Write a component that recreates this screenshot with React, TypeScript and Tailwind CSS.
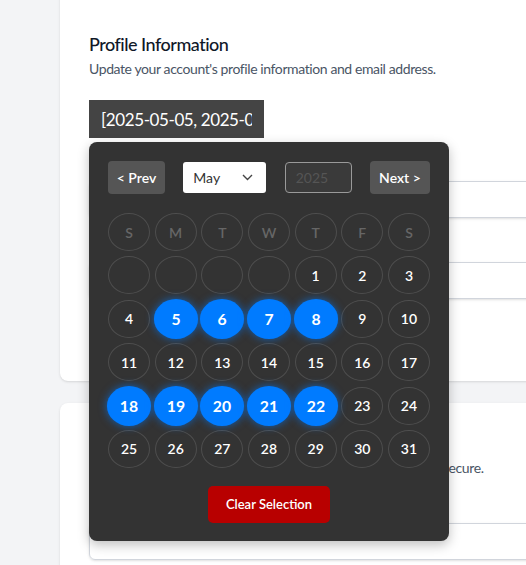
import { useState } from 'react';

const WEEKDAYS = ['S', 'M', 'T', 'W', 'T', 'F', 'S'];
const MONTHS = [
  'January', 'February', 'March', 'April', 'May', 'June',
  'July', 'August', 'September', 'October', 'November', 'December',
];

function pad(n: number) {
  return n < 10 ? `0${n}` : `${n}`;
}

function DatePopup({ selected, onClear }: { selected: number[]; onClear: () => void }) {
  // mayo 2025 empieza en jueves
  const cells: (number | null)[] = [null, null, null, null];
  for (let d = 1; d <= 31; d++) cells.push(d);

  return (
    <div className="absolute left-0 top-[calc(100%+4px)] z-10 w-[360px] rounded-lg bg-[#333333] px-[19px] pt-[19px] pb-[18px] shadow-[0_4px_12px_rgba(0,0,0,0.25)]">
      <div className="flex h-[33px] items-center justify-between">
        <button className="h-[33px] w-[57px] rounded-[4px] bg-[#555555] text-[14px] font-semibold text-white">
          &lt; Prev
        </button>
        <div className="relative h-[31px] w-[83px]">
          <select
            defaultValue="May"
            className="h-full w-full appearance-none rounded-[3px] bg-white pl-[10px] text-[14px] text-[#333333] outline-none"
          >
            {MONTHS.map((m) => (
              <option key={m} value={m.slice(0, 3) === 'May' ? 'May' : m}>
                {m}
              </option>
            ))}
          </select>
          <svg
            className="pointer-events-none absolute right-[13px] top-[12px]"
            width="11"
            height="7"
            viewBox="0 0 11 7"
            fill="none"
            stroke="#444"
            strokeWidth="1.4"
          >
            <path d="M1 1l4.5 4.5L10 1" />
          </svg>
        </div>
        <input
          readOnly
          placeholder="2025"
          className="h-[31px] w-[67px] rounded-[4px] border border-[#9a9a9a] bg-[#3a3a3a] px-[10px] text-[14px] text-white outline-none placeholder:text-[#555555]"
        />
        <button className="h-[33px] w-[60px] rounded-[4px] bg-[#555555] text-[14px] font-semibold text-white">
          Next &gt;
        </button>
      </div>

      <div className="mt-[19px] grid grid-cols-7 gap-x-[4.67px] gap-y-[5.4px]">
        {WEEKDAYS.map((w, i) => (
          <div
            key={i}
            className="flex h-[38px] items-center justify-center rounded-[50%] border border-[#4e4e4e] text-[14px] font-semibold text-[#666666]"
          >
            {w}
          </div>
        ))}
        {cells.map((d, i) => {
          const on = d !== null && selected.includes(d);
          return (
            <div
              key={i}
              className={
                on
                  ? 'flex h-[38px] scale-105 items-center justify-center rounded-[50%] bg-[#007bff] text-[15px] font-bold text-white shadow-[0_0_8px_rgba(0,123,255,0.65)]'
                  : 'flex h-[38px] items-center justify-center rounded-[50%] border border-[#4e4e4e] text-[14px] font-semibold text-white'
              }
            >
              {d}
            </div>
          );
        })}
      </div>

      <div className="mt-[18px] flex justify-center">
        <button
          onClick={onClear}
          className="h-[37px] w-[122px] rounded-[5px] bg-[#b80000] text-[13px] font-semibold text-white"
        >
          Clear Selection
        </button>
      </div>
    </div>
  );
}

export default function App() {
  const [selected, setSelected] = useState<number[]>([5, 6, 7, 8, 18, 19, 20, 21, 22]);
  const value = `[${selected.map((d) => `2025-05-${pad(d)}`).join(', ')}]`;

  return (
    <div className="h-[565px] w-[526px] overflow-hidden bg-gray-100 font-['Lato',sans-serif]">
      <div className="mt-[-20px] pl-[60px]">
        {/* Perfil */}
        <section className="h-[401px] w-[700px] rounded-lg bg-white pl-[29px] pt-[50px] shadow-sm">
          <h2 className="text-lg font-medium tracking-[-0.5px] text-gray-900">Profile Information</h2>
          <p className="mt-[1px] text-sm tracking-[-0.4px] text-gray-600">
            Update your account's profile information and email address.
          </p>

          <div className="relative mt-[21px] w-[175px]">
            <input
              readOnly
              value={value}
              className="h-[38px] w-full bg-[#444444] px-3 text-[17px] tracking-[-0.4px] text-white outline-none"
            />
            <DatePopup selected={selected} onClear={() => setSelected([])} />
          </div>

          <div className="mt-[18px] w-[600px]">
            <label className="block text-sm font-medium text-gray-700">Name</label>
            <input className="mt-[5px] block h-[37px] w-full rounded-md border border-gray-300 shadow-sm" />
          </div>
          <div className="mt-[20px] w-[600px]">
            <label className="block text-sm font-medium text-gray-700">Email</label>
            <input className="mt-[4px] block h-[37px] w-full rounded-md border border-gray-300 shadow-sm" />
          </div>
        </section>

        {/* Contraseña */}
        <section className="mt-[22px] h-[300px] w-[700px] rounded-lg bg-white pl-[29px] pt-[27px] shadow-sm">
          <h2 className="text-lg font-medium tracking-[-0.5px] text-gray-900">Update Password</h2>
          <p className="text-sm tracking-[-0.4px] text-gray-600">
            Ensure your account is using a long, random password to stay secure.
          </p>
          <div className="mt-[21px] w-[600px]">
            <label className="block text-sm font-medium text-gray-700">Current Password</label>
            <input className="mt-[4px] block h-[37px] w-full rounded-md border border-gray-300 shadow-sm" />
          </div>
        </section>
      </div>
    </div>
  );
}
